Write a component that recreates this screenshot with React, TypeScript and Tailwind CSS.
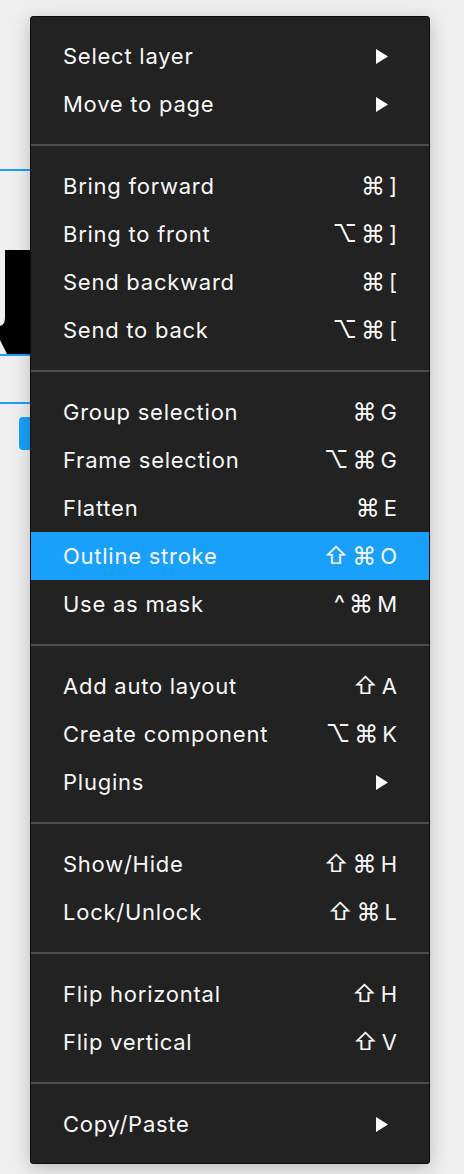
import React from "react";

type Item = { label: string; keys?: string[]; sub?: boolean; active?: boolean };

const groups: Item[][] = [
  [
    { label: "Select layer", sub: true },
    { label: "Move to page", sub: true },
  ],
  [
    { label: "Bring forward", keys: ["⌘", "]"] },
    { label: "Bring to front", keys: ["⌥", "⌘", "]"] },
    { label: "Send backward", keys: ["⌘", "["] },
    { label: "Send to back", keys: ["⌥", "⌘", "["] },
  ],
  [
    { label: "Group selection", keys: ["⌘", "G"] },
    { label: "Frame selection", keys: ["⌥", "⌘", "G"] },
    { label: "Flatten", keys: ["⌘", "E"] },
    { label: "Outline stroke", keys: ["⇧", "⌘", "O"], active: true },
    { label: "Use as mask", keys: ["^", "⌘", "M"] },
  ],
  [
    { label: "Add auto layout", keys: ["⇧", "A"] },
    { label: "Create component", keys: ["⌥", "⌘", "K"] },
    { label: "Plugins", sub: true },
  ],
  [
    { label: "Show/Hide", keys: ["⇧", "⌘", "H"] },
    { label: "Lock/Unlock", keys: ["⇧", "⌘", "L"] },
  ],
  [
    { label: "Flip horizontal", keys: ["⇧", "H"] },
    { label: "Flip vertical", keys: ["⇧", "V"] },
  ],
  [{ label: "Copy/Paste", sub: true }],
];

const symbols = new Set(["⌘", "⌥", "⇧", "^"]);

function Row({ item }: { item: Item }) {
  return (
    <div
      className={
        "flex h-12 items-center justify-between px-8 text-[#f7f7f7] " +
        (item.active ? "bg-[#18a0fb]" : "")
      }
    >
      <span className="text-[22px] leading-none tracking-[0.75px]">{item.label}</span>
      {item.sub ? (
        <svg width="12" height="15" viewBox="0 0 12 15" className="mr-[9px]">
          <polygon points="0,0 12,7.5 0,15" fill="#ffffff" />
        </svg>
      ) : (
        <span className="flex items-center gap-[4px] leading-none">
          {item.keys?.map((k, i) =>
            symbols.has(k) ? (
              <span key={i} className="text-[24px]">
                {k}
              </span>
            ) : (
              <span key={i} className="text-[22px]">
                {k}
              </span>
            )
          )}
        </span>
      )}
    </div>
  );
}

export default function App() {
  return (
    <div
      className="relative h-[1174px] w-[464px] overflow-hidden bg-[#efefef]"
      style={{ fontFamily: "Inter, 'DejaVu Sans', sans-serif" }}
    >
      {/* canvas content */}
      <div className="absolute left-0 top-[169px] h-[2px] w-[40px] bg-[#18a0fb]" />
      <svg className="absolute left-0 top-[250px]" width="40" height="105" viewBox="0 0 40 105">
        <path d="M5 0 H40 V104 H7 L0 90 V76 C4 75 5 72 5 66 Z" fill="#000" />
      </svg>
      <div className="absolute left-0 top-[354px] h-[2px] w-[40px] bg-[#18a0fb]" />
      <div className="absolute left-0 top-[402px] h-[2px] w-[40px] bg-[#18a0fb]" />
      <div className="absolute left-[19px] top-[417px] h-[33px] w-[24px] rounded-[4px] bg-[#18a0fb]" />

      {/* context menu */}
      <div className="absolute left-[30px] top-4 w-[400px] rounded-[3px] border border-[#0c0c0c] bg-[#222222] py-[15px] shadow-[0_4px_18px_rgba(0,0,0,0.22)]">
        {groups.map((g, gi) => (
          <div key={gi}>
            {gi > 0 && <div className="my-4 h-[2px] bg-[#4d4d4d]" />}
            {g.map((it) => (
              <Row key={it.label} item={it} />
            ))}
          </div>
        ))}
      </div>
    </div>
  );
}
